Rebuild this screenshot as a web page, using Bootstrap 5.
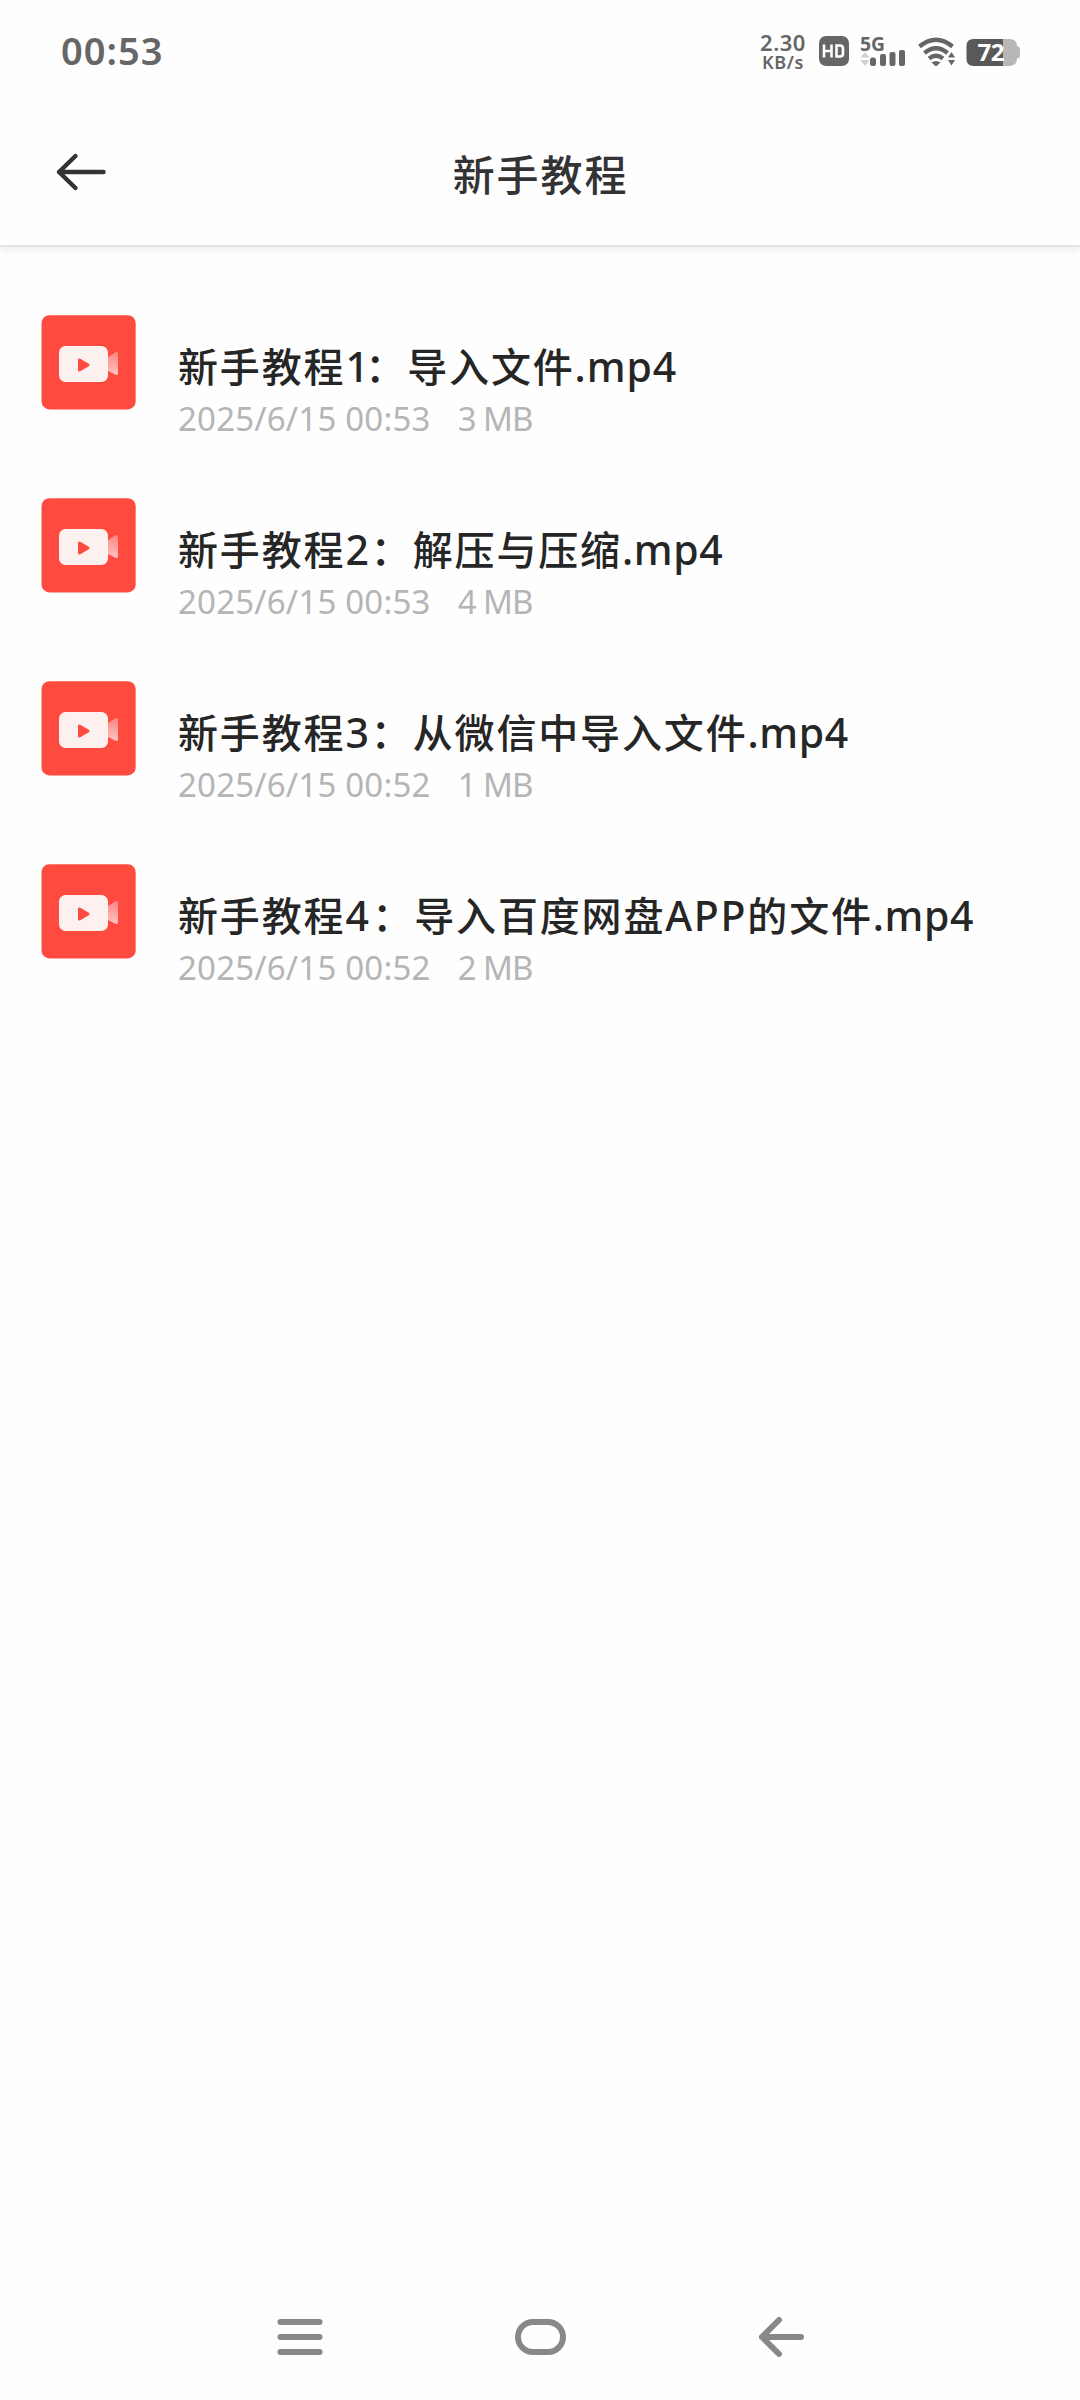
<!DOCTYPE html>
<html lang="zh-CN">
<head>
<meta charset="utf-8">
<meta name="viewport" content="width=device-width, initial-scale=1">
<title>新手教程</title>
<link href="https://cdn.jsdelivr.net/npm/bootstrap@5.3.0/dist/css/bootstrap.min.css" rel="stylesheet">
<style>
body { font-family: "Noto Sans", "Noto Sans CJK SC", sans-serif; background: #fefefe; white-space: nowrap; }
.screen { width: 1080px; height: 2400px; }
.status { height: 102px; padding: 0 60px 0 61px; color: #666; }
.clock { font-size: 38px; line-height: 101px; font-weight: 600; letter-spacing: 1px; }
.speed { width: 48px; margin-right: 11px; text-align: center; font-weight: 600; padding-top: 31px; }
.speed-num { font-size: 22px; line-height: 22px; letter-spacing: .5px; }
.speed-unit { font-size: 18px; line-height: 18px; letter-spacing: .6px; font-weight: 600; }
.icons-status { width: 202px; height: 40px; margin-top: 29px; }
.topbar { height: 145px; border-bottom: 2px solid #e4e4e4; box-shadow: 0 2px 8px rgba(0,0,0,.09); clip-path: inset(0 0 -14px 0); padding: 0 55px; }
.back-icon { width: 54px; height: 44px; margin-top: 48px; }
.page-title { font-family: "Noto Sans CJK SC", sans-serif; font-size: 42px; line-height: 60px; letter-spacing: 1.9px; font-weight: 500; color: #333; padding: 41px 0 0 1px; }
.side { width: 54px; }
.files { padding: 68px 41px 0; }
.file-row { height: 183px; }
.thumb { width: 95px; height: 95px; margin-right: 42px; }
.file-text { padding-top: 20px; }
.file-name { font-size: 41px; line-height: 60px; height: 60px; font-weight: 500; color: #262626; }
.zh { font-family: "Noto Sans CJK SC", sans-serif; font-size: 40px; letter-spacing: 1.85px; }
.digit-narrow { letter-spacing: -3.5px; }
.digit { letter-spacing: 2px; }
.digit-wide { letter-spacing: 3.5px; }
.latin { letter-spacing: 1.7px; }
.ext-tight { letter-spacing: .9px; }
.ext { letter-spacing: .6px; }
.meta { font-size: 33px; line-height: 40px; color: #b5b5b5; letter-spacing: .2px; padding-top: 4px; }
.size-text { margin-left: 27px; letter-spacing: -1px; }
.sysnav { height: 126px; }
</style>
</head>
<body>
<div class="screen d-flex flex-column overflow-hidden">
  <div class="status d-flex justify-content-between flex-shrink-0">
    <div class="clock">00:53</div>
    <div class="d-flex">
      <div class="speed"><div class="speed-num">2.30</div><div class="speed-unit">KB/s</div></div>
      <svg class="icons-status overflow-visible" viewBox="818 29 202 40">
        <rect x="819" y="36" width="30" height="30" rx="7" fill="#666"/>
        <path d="M824 44.500V57.500M831.500 44.500V57.500M824 51H831.500M836.500 45.500V56.500H840Q843 56.500 843 53.500V48.500Q843 45.500 840 45.500Z" fill="none" stroke="#fff" stroke-width="2.600"/>
        <text x="860" y="50.500" font-size="19" font-weight="700" fill="#666" textLength="25" lengthAdjust="spacingAndGlyphs">5G</text>
        <path d="M865 52L869.500 57.500H860.500ZM865 66L869.500 60H860.500Z" fill="#d0d0d0"/>
        <g fill="#666">
          <rect x="870" y="57.500" width="6" height="8.500" rx="2.500"/>
          <rect x="880" y="54" width="6" height="12" rx="2"/>
          <rect x="889.500" y="52" width="6" height="14" rx="2"/>
          <rect x="899" y="50" width="6" height="16" rx="2"/>
          <path d="M931.500 62.500Q936 59.500 940.500 62.500L936 66.500Z"/>
          <path d="M951.500 52L955 57.500H948ZM951.500 65.500L955 60H948Z"/>
        </g>
        <g fill="none" stroke="#666" stroke-width="4.300">
          <path d="M919.500 46.500Q936 33 952.500 46.500"/>
          <path d="M924.500 53Q936 43.500 947.500 53"/>
          <path d="M929 58.500Q936 53 943 58.500"/>
        </g>
        <path d="M1003 39H1009Q1017 39 1017 46Q1020 46.500 1020 49.500V55.500Q1020 58 1017 58.500Q1017 66 1009 66H1003Z" fill="#b7b7b7"/>
        <path d="M1003 39H973.500Q966.500 39 966.500 46V59Q966.500 66 973.500 66H1003Z" fill="#595959"/>
        <text x="977.500" y="61" font-size="24" font-weight="700" fill="#fff" textLength="27">72</text>
      </svg>
    </div>
  </div>
  <header class="topbar d-flex justify-content-between flex-shrink-0">
    <svg class="back-icon" viewBox="55 150 54 44" fill="none" stroke="#333" stroke-width="4.400" stroke-linecap="round" stroke-linejoin="round"><path d="M75.500 156L59 172L75.500 188M59 172H103.500"/></svg>
    <h1 class="page-title m-0">新手教程</h1>
    <div class="side"></div>
  </header>
  <main class="files flex-grow-1">
    <svg width="0" height="0" class="position-absolute">
      <defs>
        <linearGradient id="horn" x1="0" y1="0" x2="0" y2="1"><stop offset="0" stop-color="#ff8580"/><stop offset="1" stop-color="#ffc5c3"/></linearGradient>
        <symbol id="video" viewBox="0 0 95 95">
          <rect x=".5" y=".2" width="94.200" height="94.200" rx="8" fill="#ff4b3f"/>
          <path d="M67 42L75 37Q77 36.500 77 38.500V58Q77 60.500 75 60L67 56Z" fill="url(#horn)"/>
          <rect x="18" y="31" width="49" height="36" rx="6.500" fill="#fcf1ee"/>
          <path d="M38.500 45V55L47 50Z" fill="#ff4b3f" stroke="#ff4b3f" stroke-width="3" stroke-linejoin="round"/>
        </symbol>
      </defs>
    </svg>
    <div class="file-row d-flex">
      <svg class="thumb"><use href="#video"/></svg>
      <div class="file-text">
        <div class="file-name"><span class="zh">新手教程</span><span class="digit-narrow">1</span><span class="zh">：导入文件</span><span class="ext-tight">.mp4</span></div>
        <div class="meta">2025/6/15 00:53<span class="size-text">3 MB</span></div>
      </div>
    </div>
    <div class="file-row d-flex">
      <svg class="thumb"><use href="#video"/></svg>
      <div class="file-text">
        <div class="file-name"><span class="zh">新手教程</span><span class="digit">2</span><span class="zh">：解压与压缩</span><span class="ext">.mp4</span></div>
        <div class="meta">2025/6/15 00:53<span class="size-text">4 MB</span></div>
      </div>
    </div>
    <div class="file-row d-flex">
      <svg class="thumb"><use href="#video"/></svg>
      <div class="file-text">
        <div class="file-name"><span class="zh">新手教程</span><span class="digit">3</span><span class="zh">：从微信中导入文件</span><span class="ext">.mp4</span></div>
        <div class="meta">2025/6/15 00:52<span class="size-text">1 MB</span></div>
      </div>
    </div>
    <div class="file-row d-flex">
      <svg class="thumb"><use href="#video"/></svg>
      <div class="file-text">
        <div class="file-name"><span class="zh">新手教程</span><span class="digit-wide">4</span><span class="zh">：导入百度网盘</span><span class="latin">APP</span><span class="zh">的文件</span><span class="ext">.mp4</span></div>
        <div class="meta">2025/6/15 00:52<span class="size-text">2 MB</span></div>
      </div>
    </div>
  </main>
  <nav class="sysnav d-flex flex-shrink-0">
    <svg width="1080" height="126" viewBox="0 2274 1080 126" fill="none" stroke="#888" stroke-width="6" stroke-linecap="round" stroke-linejoin="round">
      <path d="M280.500 2322H319.500M280.500 2337H319.500M280.500 2352H319.500"/>
      <rect x="518" y="2322" width="45" height="30" rx="15"/>
      <path d="M779 2320L762 2337L779 2354M762 2337H801"/>
    </svg>
  </nav>
</div>
<script src="https://cdn.jsdelivr.net/npm/bootstrap@5.3.0/dist/js/bootstrap.bundle.min.js"></script>
</body>
</html>
